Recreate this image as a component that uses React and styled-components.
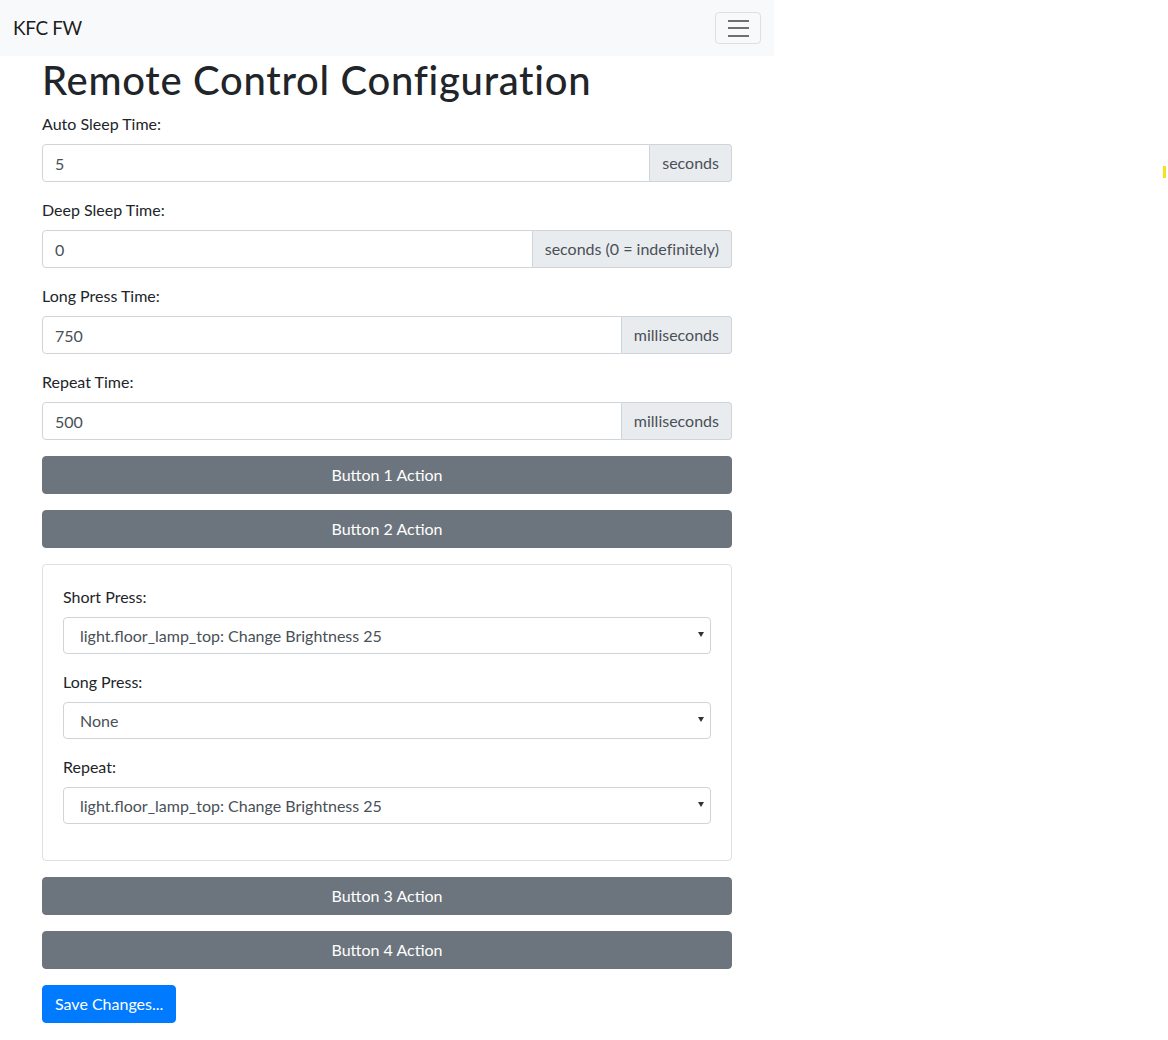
import React, { useState } from "react";
import styled, { createGlobalStyle } from "styled-components";

const GlobalStyle = createGlobalStyle`
    html, body {
        margin: 0;
        padding: 0;
        background: #ffffff;
    }
    body {
        font-family: Lato, "Noto Sans", "Liberation Sans", sans-serif;
        font-size: 16px;
        line-height: 1.5;
        color: #212529;
        font-variant-ligatures: none;
    }
    *, *::before, *::after {
        box-sizing: border-box;
    }
`;

const timings = [
    { id: "autoSleep", label: "Auto Sleep Time:", value: "5", unit: "seconds" },
    { id: "deepSleep", label: "Deep Sleep Time:", value: "0", unit: "seconds (0 = indefinitely)" },
    { id: "longPress", label: "Long Press Time:", value: "750", unit: "milliseconds" },
    { id: "repeat", label: "Repeat Time:", value: "500", unit: "milliseconds" },
];

const actionOptions = [
    "None",
    "light.floor_lamp_top: Change Brightness 25",
];

function ActionSelect({ label, value }) {
    return (
        <FormGroup>
            <Label>{label}</Label>
            <SelectWrap>
                <Select defaultValue={value}>
                    {actionOptions.map((opt) => (
                        <option key={opt} value={opt}>{opt}</option>
                    ))}
                </Select>
                <Caret viewBox="0 0 6 5" aria-hidden="true">
                    <path d="M0 0h6L3 5z" fill="#333" />
                </Caret>
            </SelectWrap>
        </FormGroup>
    );
}

function App() {
    const [open, setOpen] = useState(2);

    return (
        <>
            <GlobalStyle />
            <Page>
                <Navbar>
                    <Brand href="#">KFC FW</Brand>
                    <Toggler type="button" aria-label="Toggle navigation">
                        <span />
                        <span />
                        <span />
                    </Toggler>
                </Navbar>

                <Container>
                    <Title>Remote Control Configuration</Title>

                    {timings.map((t) => (
                        <FormGroup key={t.id}>
                            <Label htmlFor={t.id}>{t.label}</Label>
                            <InputGroup>
                                <Input id={t.id} type="text" defaultValue={t.value} />
                                <Append>{t.unit}</Append>
                            </InputGroup>
                        </FormGroup>
                    ))}

                    {[1, 2, 3, 4].map((n) => (
                        <React.Fragment key={n}>
                            <ActionButton type="button" onClick={() => setOpen(open === n ? 0 : n)}>
                                Button {n} Action
                            </ActionButton>
                            {open === n && (
                                <Card>
                                    <ActionSelect label="Short Press:" value="light.floor_lamp_top: Change Brightness 25" />
                                    <ActionSelect label="Long Press:" value="None" />
                                    <ActionSelect label="Repeat:" value="light.floor_lamp_top: Change Brightness 25" />
                                </Card>
                            )}
                        </React.Fragment>
                    ))}

                    <SaveButton type="button">Save Changes...</SaveButton>
                </Container>
            </Page>
            <Marker />
        </>
    );
}

const Page = styled.div`
    width: 774px;
    min-height: 1040px;
`;

const Navbar = styled.nav`
    display: flex;
    align-items: center;
    justify-content: space-between;
    height: 56px;
    padding: 0 13px;
    background: #f8f9fa;
`;

const Brand = styled.a`
    font-size: 19px;
    letter-spacing: -0.4px;
    color: rgba(0, 0, 0, 0.9);
    text-decoration: none;
    line-height: 1.5;
`;

const Toggler = styled.button`
    display: flex;
    flex-direction: column;
    align-items: center;
    justify-content: center;
    gap: 5.5px;
    width: 46px;
    height: 32px;
    padding: 0;
    background: transparent;
    border: 1px solid rgba(0, 0, 0, 0.1);
    border-radius: 4px;
    span {
        display: block;
        width: 21px;
        height: 2px;
        background: rgba(0, 0, 0, 0.55);
    }
`;

const Container = styled.main`
    width: 690px;
    margin-left: 42px;
    padding-bottom: 16px;
`;

const Title = styled.h1`
    margin: 0 0 8px;
    font-size: 40px;
    font-weight: 500;
    line-height: 1.2;
    letter-spacing: 0.7px;
    color: #212529;
`;

const FormGroup = styled.div`
    margin-bottom: 16px;
`;

const Label = styled.label`
    display: block;
    margin-bottom: 8px;
    font-size: 16px;
    line-height: 24px;
    color: #212529;
`;

const InputGroup = styled.div`
    display: flex;
    align-items: stretch;
    width: 100%;
`;

const Input = styled.input`
    flex: 1;
    min-width: 0;
    height: 38px;
    padding: 6px 12px;
    font-family: inherit;
    font-size: 16px;
    color: #495057;
    background: #fff;
    border: 1px solid #ced4da;
    border-radius: 4px 0 0 4px;
    outline: none;
`;

const Append = styled.span`
    display: flex;
    align-items: center;
    padding: 6px 12px;
    font-size: 16px;
    color: #495057;
    white-space: nowrap;
    background: #e9ecef;
    border: 1px solid #ced4da;
    border-left: 0;
    border-radius: 0 4px 4px 0;
`;

const BaseButton = styled.button`
    display: block;
    height: 38px;
    padding: 6px 12px;
    font-family: inherit;
    font-size: 16px;
    line-height: 24px;
    white-space: nowrap;
    color: #fff;
    border: 1px solid transparent;
    border-radius: 4px;
    cursor: pointer;
`;

const ActionButton = styled(BaseButton)`
    width: 100%;
    margin-bottom: 16px;
    background: #6c757d;
    border-color: #6c757d;
`;

const SaveButton = styled(BaseButton)`
    min-width: 134px;
    background: #007bff;
    border-color: #007bff;
`;

const Card = styled.div`
    margin-bottom: 16px;
    padding: 20px 20px 20px;
    border: 1px solid rgba(0, 0, 0, 0.125);
    border-radius: 4px;
`;

const SelectWrap = styled.div`
    position: relative;
`;

const Select = styled.select`
    display: block;
    width: 100%;
    height: 37px;
    padding: 0 30px 0 16px;
    font-family: inherit;
    font-size: 16px;
    color: #495057;
    background: #fff;
    border: 1px solid #ced4da;
    border-radius: 4px;
    appearance: none;
    outline: none;
`;

const Caret = styled.svg`
    position: absolute;
    right: 7px;
    top: 15px;
    width: 6px;
    height: 5px;
    pointer-events: none;
`;

const Marker = styled.div`
    position: absolute;
    left: 1163px;
    top: 166px;
    width: 3px;
    height: 12px;
    background: #f5e21c;
`;

export default App;
